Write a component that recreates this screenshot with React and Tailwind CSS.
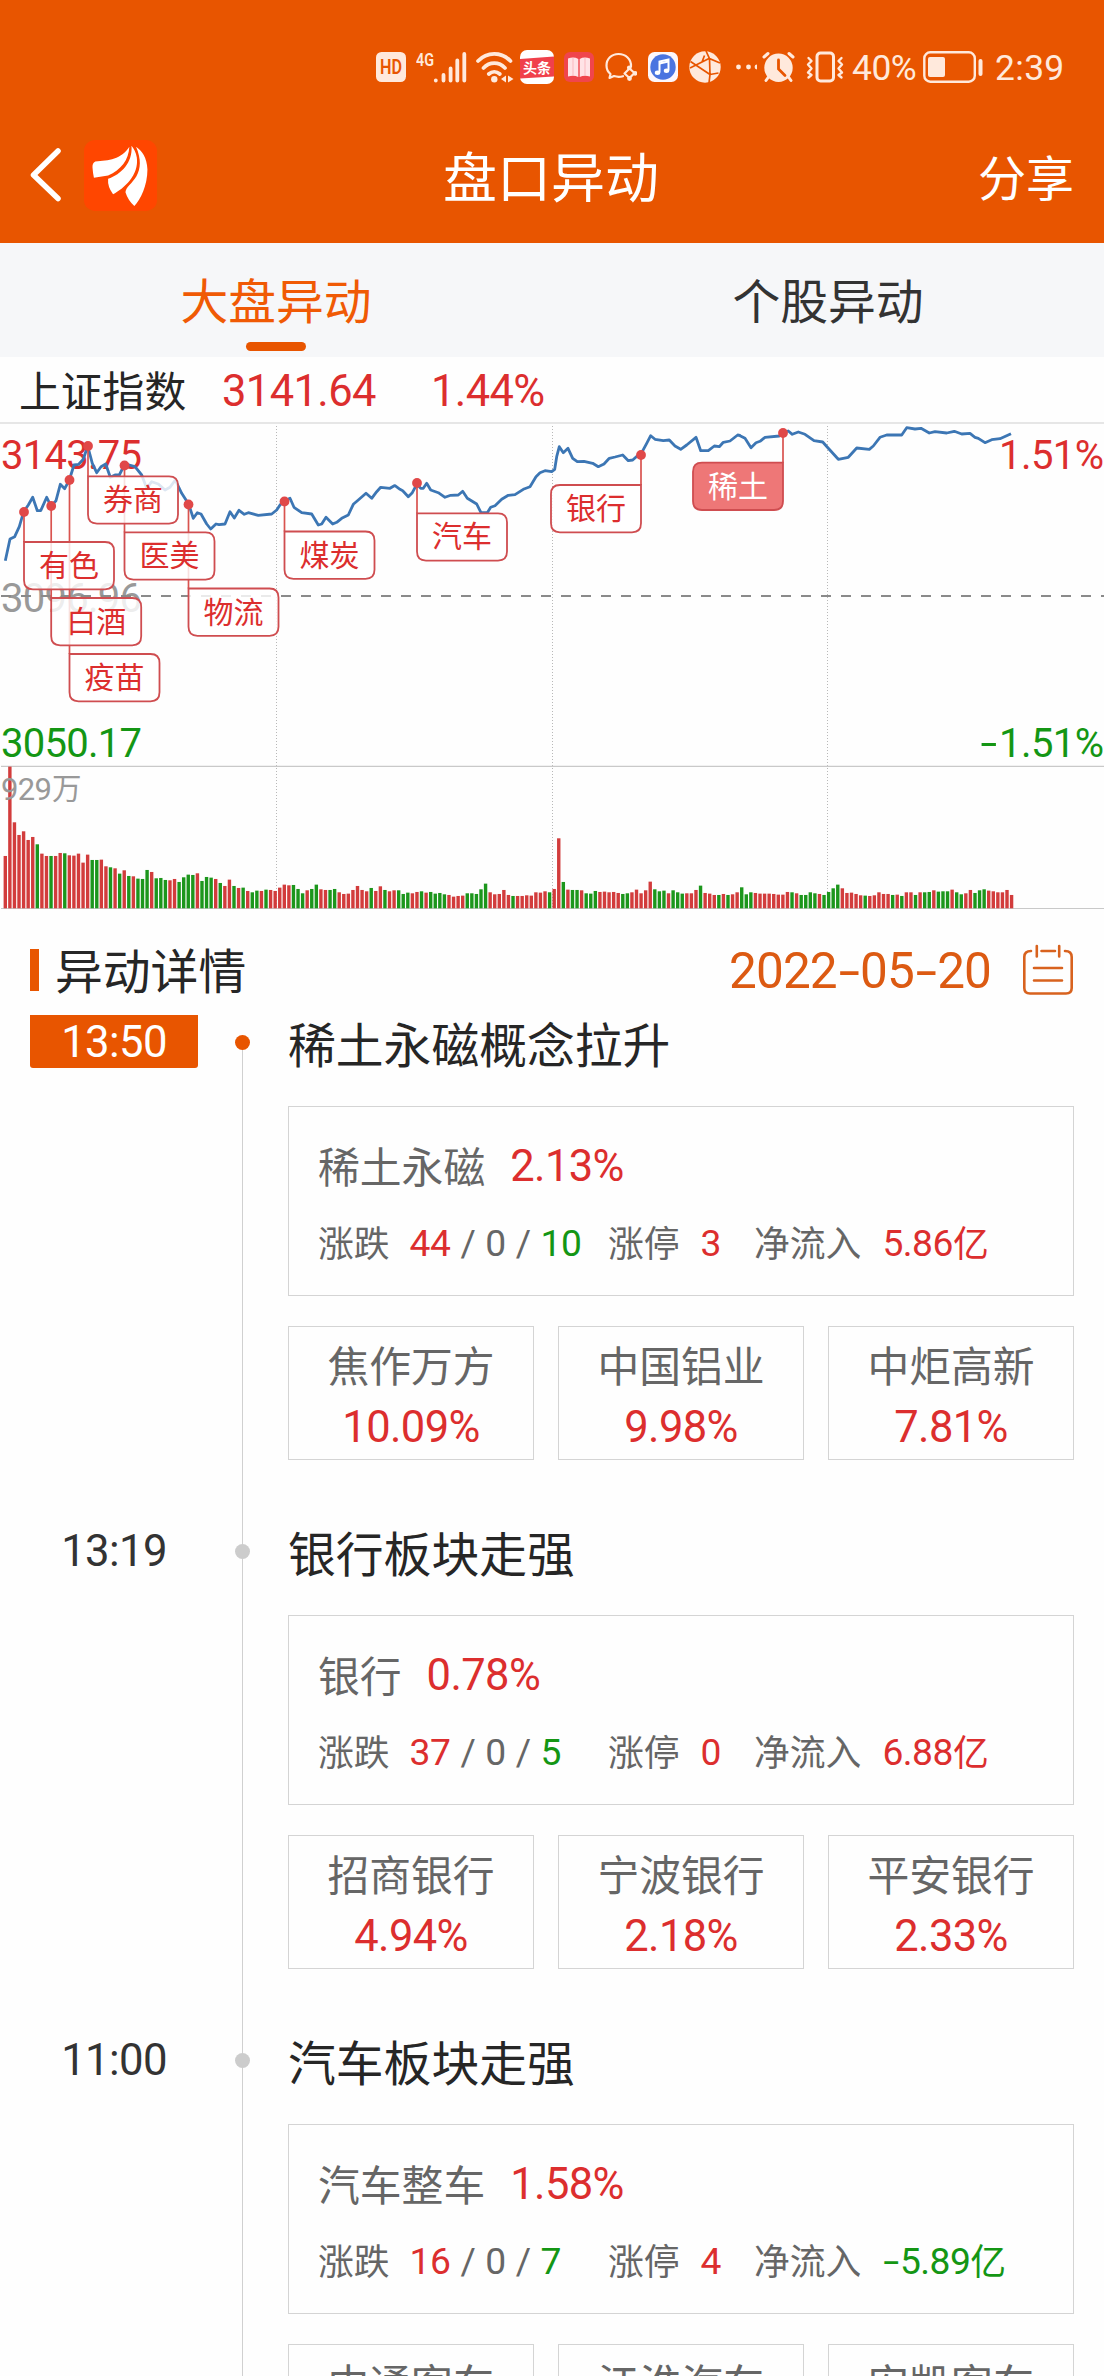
import React from "react";

/* ---------- shared text helpers ---------- */

const NUM = "font-[Roboto] text-[1.04em] tracking-[-0.014em]";

function Dash() {
  return <span className="inline-block w-[0.47em] origin-center scale-x-[1.55] text-center">-</span>;
}

function Num({ children, className = "" }) {
  const parts = String(children).split("-");
  return (
    <span className={`${NUM} ${className}`}>
      {parts.map((part, i) => (
        <React.Fragment key={i}>
          {i > 0 && <Dash />}
          {part}
        </React.Fragment>
      ))}
    </span>
  );
}

/* ---------- status bar ---------- */

const CREAM = "#ffe9dc";

function StatusBar() {
  return (
    <div className="flex h-[134px] items-center pl-[376px] text-[34px] leading-none text-[#ffe9dc]">
      <svg width="30" height="30" viewBox="0 0 30 30">
        <rect width="30" height="30" rx="5.5" fill={CREAM} />
        <text x="15" y="22" textAnchor="middle" fontFamily="Roboto" fontWeight="600" fontSize="19.5" textLength="22" lengthAdjust="spacingAndGlyphs" fill="#e85500">HD</text>
      </svg>
      <svg className="ml-[10px]" width="51" height="32" viewBox="0 0 51 32">
        <text x="0" y="15" fontFamily="Roboto" fontWeight="600" fontSize="18.5" textLength="18" lengthAdjust="spacingAndGlyphs" fill={CREAM}>4G</text>
        <g stroke={CREAM} strokeWidth="3.8" strokeLinecap="round">
          <path d="M19.8 29.3v.2M27.5 24v5.5M34.6 17.5v12M41.3 9.500v20M48.300 3v26.500" />
        </g>
      </svg>
      <svg className="ml-[9px]" width="38" height="32" viewBox="0 0 38 32">
        <g fill="none" stroke={CREAM} strokeWidth="3.7" strokeLinecap="round">
          <path d="M2 10c9-9.500 23.500-9.500 32.500 0M7.500 17c6-6.500 15.500-6.500 21.500 0M12.800 23c3.400-3 7.600-3 11 0" />
        </g>
        <circle cx="18.300" cy="28.300" r="3.200" fill={CREAM} />
        <path d="M30 24.500v7l-5-3.500zM32 24.500v7l5.500-3.500z" fill={CREAM} />
      </svg>
      <svg className="ml-[6px]" width="34" height="34" viewBox="0 0 34 34">
        <rect width="34" height="34" rx="7" fill="#fff" />
        <path d="M0 9L34 6.500V26.500L0 28.500z" fill="#f0404b" />
        <text x="17" y="23" textAnchor="middle" fontFamily="Noto Sans CJK SC" fontWeight="700" fontSize="14" fill="#fff">头条</text>
      </svg>
      <svg className="ml-[10px]" width="30" height="30" viewBox="0 0 30 30">
        <rect width="30" height="30" rx="6" fill="#f0454c" />
        <path d="M4 6.500Q10 4.500 14.300 7V25Q10 23 4 24.500zM26 6.500Q20 4.500 15.700 7V25Q20 23 26 24.500z" fill="#ffe3e6" />
        <path d="M9 5.800v18M21 5.800v18" stroke="#fbb9bf" strokeWidth="1" />
      </svg>
      <svg className="ml-[11px]" width="32" height="30" viewBox="0 0 32 30" fill="none" stroke={CREAM} strokeWidth="2.200" strokeLinejoin="round" strokeLinecap="round">
        <path d="M26 14.500C26.500 7 20.500 2 13.500 2S1.500 7 1.500 13.500c0 3.500 1.500 6.500 4 8.500L4.500 26l4.500-2c3 1 6 1 9 .2" />
        <path d="M24.500 16.500l5 4.500-5 5-5-4.500z" />
        <circle cx="24.300" cy="15.800" r="1.300" fill={CREAM} /><circle cx="30" cy="21.300" r="1.300" fill={CREAM} /><circle cx="24.500" cy="26.500" r="1.300" fill={CREAM} />
      </svg>
      <svg className="ml-[11px]" width="30" height="30" viewBox="0 0 30 30">
        <rect width="30" height="30" rx="6.500" fill="#fdf6fa" />
        <circle cx="15" cy="15" r="12.700" fill="#4b74e0" />
        <path d="M11.500 20.500V9.500l9-2v11" fill="none" stroke="#fff" strokeWidth="2" />
        <path d="M11.500 11.500l9-2" stroke="#fff" strokeWidth="2" />
        <ellipse cx="9.500" cy="20.800" rx="2.700" ry="2.200" fill="#fff" /><ellipse cx="18.500" cy="18.800" rx="2.700" ry="2.200" fill="#fff" />
      </svg>
      <svg className="ml-[11px]" width="32" height="32" viewBox="0 0 32 32">
        <circle cx="16" cy="16" r="15.700" fill={CREAM} />
        <g fill="none" stroke="#e85500" strokeWidth="1.700">
          <path d="M1 17L20 7.500M17 0l3.500 7.500L31 12M1.500 10.500L21 23.500M20.500 7.500l.5 16M21 23.500L20 32M21 23.500l8.500-1.500M15.500 4.500L13 11" />
        </g>
      </svg>
      <svg className="ml-[15px]" width="21" height="6" viewBox="0 0 21 6" fill={CREAM}>
        <circle cx="2.500" cy="3" r="2.400" /><circle cx="12.500" cy="3" r="2.400" /><path d="M21 .6a2.400 2.400 0 0 0 0 4.800z" />
      </svg>
      <svg className="ml-[5px]" width="33" height="32" viewBox="0 0 33 32">
        <g stroke={CREAM} strokeWidth="3" strokeLinecap="round"><path d="M2 6l4-3.500M31 6l-4-3.500M6.500 26L4 29.500M26.500 26l2.500 3.500" /></g>
        <circle cx="16.500" cy="16.800" r="14.200" fill={CREAM} />
        <path d="M16.500 9v9l6.500 6.500" fill="none" stroke="#e85500" strokeWidth="2.800" strokeLinecap="round" />
      </svg>
      <svg className="ml-[11px]" width="38" height="32" viewBox="0 0 38 32" fill="none" stroke={CREAM}>
        <rect x="11" y="2" width="16.500" height="28" rx="3.500" strokeWidth="3" />
        <path d="M2.500 7l3 3-3.500 3.500 3.500 4L2 21.500l3.500 2.500-3 2.500M35.500 7l-3 3 3.500 3.500-3.500 4 3.500 4-3.500 2.500 3 2.500" strokeWidth="2.400" strokeLinecap="round" strokeLinejoin="round" />
      </svg>
      <Num className="ml-[8px] w-[66px] pt-[3px] whitespace-nowrap">40%</Num>
      <svg className="ml-[5px]" width="61" height="32" viewBox="0 0 61 32">
        <rect x="1.300" y="1.300" width="50.500" height="29.400" rx="6" fill="none" stroke={CREAM} strokeWidth="2.400" />
        <rect x="5" y="6" width="17" height="20" rx="2" fill={CREAM} />
        <rect x="55.500" y="8" width="4" height="17" rx="2" fill={CREAM} />
      </svg>
      <Num className="ml-[11px] pt-[3px] tracking-[0.01em]">2:39</Num>
    </div>
  );
}

/* ---------- title bar ---------- */

function TitleBar() {
  return (
    <div className="grid h-[109px] grid-cols-[1fr_auto_1fr] items-start pr-[30px] pl-[28px] text-white">
      <div className="flex pt-[6px]">
        <svg width="36" height="70" viewBox="0 0 36 70" fill="none" stroke="#fff" strokeWidth="5.500" strokeLinecap="round" strokeLinejoin="round">
          <path d="M30 11L5.500 35 30 58.500" />
        </svg>
        <svg className="ml-[20px]" width="73" height="71" viewBox="240 60 206 212" preserveAspectRatio="none">
          <rect x="240" y="60" width="206" height="212" rx="32" fill="#ff4600" />
          <g fill="#fff">
            <path d="M368 80C345 118 310 121 272 124Q263 128 264 142Q265 158 268 173L308 166C345 148 366 120 368 80z" />
            <path d="M374 77C378 128 345 162 308 176Q306 200 322 222C352 205 396 165 389 112Q386 92 374 77z" />
            <path d="M387 80C402 118 400 145 388 168C376 190 358 200 357 216Q364 240 382 257C400 238 419 195 419 148C418 112 403 92 387 80z" />
          </g>
        </svg>
      </div>
      <h1 className="pt-[14px] text-[54px] leading-[54px]">盘口异动</h1>
      <div className="pt-[17px] text-right text-[48px] leading-[48px]">分享</div>
    </div>
  );
}

/* ---------- market chart ---------- */

const PRICE = [
  [0, "16,452 30,387 44,380 58,350 71,305 85,285 98,262 112,302 122,302 140,262 153,288 168,272 181,223 194,236 208,210 222,165 236,163 250,148 263,108 277,160 290,188 303,170 317,162 331,202 345,195 358,195 373,165 388,165 405,170 425,195 440,235 455,215 475,222 495,240 510,232 526,210 545,250 566,283 580,325 592,308 603,312 620,342 632,357 648,342 657,344 675,342 690,305 703,324 717,301 733,313 745,308 775,316 815,312 830,300 840,285 853,272 870,265 882,292 905,308 935,312 955,345 965,342 978,322 998,342 1010,337 1025,325 1045,315 1060,283 1075,270 1098,250 1115,265 1130,245 1142,232 1170,235 1185,227"],
  [380, "60,238 43,227 68,242 85,260 97,248 111,222 122,235 130,235 140,220 152,240 175,248 195,262 212,256 235,255 248,244 262,265 290,282 303,308 322,308 332,292 345,287 365,268 385,256 405,254 430,238 450,230 468,200 480,188 495,182 515,185 524,178 530,140 538,110 550,128 564,115 578,145 592,155 612,154 638,160 655,170 672,162 688,145 705,141 728,135 745,152 758,150 775,135 785,128 800,100 812,77 825,88 850,92 868,90 885,108 902,118 920,105 948,82 962,122 985,122 1003,108 1018,110 1030,97 1050,93 1073,75 1080,76"],
  [740, "0,77 15,85 33,113 48,98 60,94 75,82 118,78 128,68 145,63 157,73 175,66 195,73 222,92 248,96 265,115 295,148 325,142 350,114 388,118 400,108 420,82 440,75 485,75 500,53 525,57 543,55 568,69 585,65 620,69 643,64 665,72 690,70 705,82 715,85 735,98 755,89 780,86 813,71"],
];

const pricePoints = PRICE.flatMap(([origin, list]) =>
  list.split(" ").map((pair) => {
    const [x, y] = pair.split(",").map(Number);
    return [origin + x / 3, 410 + y / 3];
  })
)
  .sort((a, b) => a[0] - b[0])
  .map(([x, y]) => `${x.toFixed(1)},${y.toFixed(1)}`)
  .join(" ");

/* One entry per minute: direction and the bar's top edge; the base line is 475. */
const VOLUME = (
  "r318 r50 r217 r255 r244 r270 r261 g283 r311 r318 g318 r318 r309 g310 r316 r317 r311 r338 r314 g330 g330 r329 r349 g352 r355 g371 r361 g378 r379 g386 g387 g360 r366 g385 g384 g390 r391 r387 g396 g382 g374 g375 r370 g393 g381 g383 r387 g399 r408 r389 g408 r414 g413 r423 g427 g422 r423 g419 r420 r423 r413 r404 r406 g405 g417 g430 r421 g417 g404 r418 r420 g420 g417 r427 r432 r431 r420 r408 r420 r424 g414 r423 " +
  "r409 g420 r424 r421 g421 g432 g428 r430 r426 g424 r428 g426 g431 g429 g433 r435 r440 r438 r437 g430 g430 g432 g418 g401 r427 r433 r432 r420 r435 g438 r438 r438 r436 r437 r427 r428 r424 g427 r417 r265 g396 r419 g420 g420 r421 g430 g431 g423 r426 r425 r427 r426 r429 g432 g430 r427 r419 r430 r421 r395 g418 g424 g422 r430 g421 g427 g431 r430 r430 r420 g407 r429 r431 r435 g435 r432 g435 r433 r427 g412 g433 g427 " +
  "r429 r431 r431 r431 r432 r434 r434 r426 g427 r430 g435 g435 g427 g430 r432 g435 g426 g415 g404 r415 r429 r428 r432 r436 g437 r438 r436 r427 r432 r432 g435 r434 g438 r427 r427 g435 r427 g427 g426 r421 g425 g424 g424 r419 g427 g433 r430 r420 g429 g421 g418 r422 r424 r427 r427 r420 r435"
).split(" ");

const FLAGS = [
  { name: "疫苗", x: 69.5, dot: 480, top: 654 },
  { name: "白酒", x: 51.2, dot: 506, top: 598 },
  { name: "有色", x: 24, dot: 512, top: 542 },
  { name: "物流", x: 188.5, dot: 504.5, top: 588.5 },
  { name: "医美", x: 124.5, dot: 465.5, top: 532.3 },
  { name: "券商", x: 88, dot: 446, top: 476.3 },
  { name: "煤炭", x: 284.5, dot: 501.5, top: 531.5 },
  { name: "汽车", x: 417, dot: 483, top: 513.3 },
  { name: "银行", x: 641, dot: 455, top: 485, left: true },
  { name: "稀土", x: 783, dot: 433, top: 462.7, left: true, active: true },
];

function Flag({ name, x, top, left, active }) {
  const dir = left ? -1 : 1;
  const d = `M${x} ${top}h${81 * dir}q${9 * dir} 0 ${9 * dir} 9v29.300q0 9 ${-9 * dir} 9h${-72 * dir}q${-9 * dir} 0 ${-9 * dir} -9z`;
  const rounded = `M${x} ${top}h${-81}q-9 0 -9 9v29.300q0 9 9 9h72q9 0 9 -9z`;
  return (
    <g>
      <path d={left ? rounded : d} fill={active ? "#ee7777" : "#fff"} fillOpacity={active ? 1 : 0.82} stroke="#cf4d50" strokeWidth="1.800" />
      <text x={x + 45 * dir} y={top + 34} textAnchor="middle" fontFamily="Noto Sans CJK SC" fontSize="30" fill={active ? "#fff" : "#dc2e2e"}>
        {name}
      </text>
    </g>
  );
}

function AxisText({ x, y, width, color, end, size = 40, children }) {
  return (
    <text x={x} y={y} fontFamily="Roboto, 'Noto Sans CJK SC'" fontSize={size} textAnchor={end ? "end" : "start"} textLength={width} fill={color}>
      {children}
    </text>
  );
}

function MarketChart() {
  return (
    <svg className="block" width="1104" height="488" viewBox="0 422 1104 488">
      <rect x="0" y="422" width="1104" height="2" fill="#e6e6e6" />
      <g stroke="#b8b8b8" strokeWidth="1" strokeDasharray="1 2">
        <path d="M276.500 426V908M552.500 426V908M827.500 426V908" />
      </g>
      <path d="M1 766.300H1104M1 908.500H1104" stroke="#c9c9c9" strokeWidth="1.200" />

      {VOLUME.map((bar, i) => {
        const h = (475 - Number(bar.slice(1))) / 3;
        return (
          <rect key={i} x={3.600 + i * 4.574} y={908.300 - h} width="3.400" height={h} fill={bar[0] === "r" ? "#d23c3c" : "#1c961c"} />
        );
      })}

      <AxisText x="1" y="612" width="141" color="#999">3096.96</AxisText>
      <path d="M1 596H1104" stroke="#8a8a8a" strokeWidth="1.800" strokeDasharray="10 10" />
      <AxisText x="1" y="468.500" width="141" color="#dc2e2e">3143.75</AxisText>
      <AxisText x="1" y="756.500" width="141" color="#149614">3050.17</AxisText>
      <AxisText x="1104" y="468.500" width="105" color="#dc2e2e" end>1.51%</AxisText>
      <AxisText x="1104" y="756.500" width="105" color="#149614" end>1.51%</AxisText>
      <text x="0" y="0" transform="translate(980.500 756.500) scale(1.500 1)" fontFamily="Roboto" fontSize="40" fill="#149614">-</text>
      <text x="1" y="800" fontFamily="Roboto" fontSize="31" textLength="51" fill="#999">929</text>
      <text x="52" y="799" fontFamily="Noto Sans CJK SC" fontSize="29.500" fill="#999">万</text>

      <polyline points={pricePoints} fill="none" stroke="#3c76b4" strokeWidth="2.800" strokeLinejoin="round" />

      {FLAGS.map((f) => (
        <path key={f.name} d={`M${f.x} ${f.dot}V${f.top}`} stroke="#d9534f" strokeWidth="1.700" />
      ))}
      {FLAGS.map((f) => (
        <Flag key={f.name} {...f} />
      ))}
      {FLAGS.map((f) => (
        <circle key={f.name} cx={f.x} cy={f.dot} r="4.900" fill="#e04848" />
      ))}
    </svg>
  );
}

/* ---------- event timeline ---------- */

const EVENTS = [
  {
    time: "13:50", title: "稀土永磁概念拉升", sector: "稀土永磁", change: "2.13%",
    up: "44", flat: "0", down: "10", limit: "3", inflow: "5.86",
    stocks: [["焦作万方", "10.09%"], ["中国铝业", "9.98%"], ["中炬高新", "7.81%"]],
  },
  {
    time: "13:19", title: "银行板块走强", sector: "银行", change: "0.78%",
    up: "37", flat: "0", down: "5", limit: "0", inflow: "6.88",
    stocks: [["招商银行", "4.94%"], ["宁波银行", "2.18%"], ["平安银行", "2.33%"]],
  },
  {
    time: "11:00", title: "汽车板块走强", sector: "汽车整车", change: "1.58%",
    up: "16", flat: "0", down: "7", limit: "4", inflow: "-5.89",
    stocks: [["中通客车"], ["江淮汽车"], ["安凯客车"]],
  },
];

function Event({ event, active }) {
  const falling = event.inflow.startsWith("-");
  return (
    <div className="flex h-[509px] shrink-0">
      <div className="w-[168px] shrink-0">
        <div className={`flex h-[53px] items-center justify-center rounded-b-[3px] pt-[2px] text-[42px] leading-none ${active ? "bg-[#e85500] text-white" : "text-[#333]"}`}>
          <Num>{event.time}</Num>
        </div>
      </div>
      <div className="flex w-[89px] shrink-0 flex-col items-center">
        <div className={`h-[20px] w-px ${active ? "bg-transparent" : "bg-[#d0d0d0]"}`} />
        <div className={`size-[15px] rounded-full ${active ? "bg-[#e85500]" : "bg-[#cccccc]"}`} />
        <div className="w-px grow bg-[#d0d0d0]" />
      </div>
      <div className="ml-px w-[786px]">
        <h3 className="pt-[3px] text-[47.800px] leading-[50px] text-[#262626]">{event.title}</h3>
        <div className="mt-[38px] h-[190px] border border-[#d4d4d4] px-[29px] pt-[38px] text-[#666]">
          <div className="flex h-[42px] items-center gap-[25px] text-[41.800px] leading-none">
            <span>{event.sector}</span>
            <Num className="pt-[2px] text-[#dc2e2e]">{event.change}</Num>
          </div>
          <div className="mt-[36px] flex h-[38px] items-center text-[35.800px] leading-none">
            <div className="flex w-[290px] items-center">
              <span className="mr-[20px]">涨跌</span>
              <span className="flex items-center gap-[10px] pt-[4px]">
                <Num className="text-[#dc2e2e]">{event.up}</Num>
                <Num>/</Num>
                <Num>{event.flat}</Num>
                <Num>/</Num>
                <Num className="text-[#149614]">{event.down}</Num>
              </span>
            </div>
            <div className="flex w-[146px] items-center gap-[21px]">
              <span>涨停</span>
              <Num className="pt-[4px] text-[#dc2e2e]">{event.limit}</Num>
            </div>
            <div className="flex items-center gap-[21px]">
              <span>净流入</span>
              <span className={`flex items-center ${falling ? "text-[#149614]" : "text-[#dc2e2e]"}`}>
                <Num className="pt-[4px]">{event.inflow}</Num>亿
              </span>
            </div>
          </div>
        </div>
        <div className="mt-[30px] grid grid-cols-3 gap-[24px]">
          {event.stocks.map(([name, pct]) => (
            <div key={name} className="flex h-[134px] flex-col items-center border border-[#d4d4d4] pt-[16px] text-[41.800px] leading-[42px] text-[#666]">
              <span>{name}</span>
              {pct && <Num className="mt-[22px] text-[#dc2e2e]">{pct}</Num>}
            </div>
          ))}
        </div>
      </div>
    </div>
  );
}

function CalendarIcon() {
  return (
    <svg className="ml-[31px]" width="52" height="52" viewBox="0 0 52 52" fill="none" stroke="#d8621e" strokeWidth="2.600" strokeLinecap="round">
      <path d="M9 7Q2.300 7 2.300 13V44Q2.300 49.500 8 49.500H44Q49.700 49.500 49.700 44V13Q49.700 7 43 7M19.500 7H33M14.800 2V12.500M37.200 2V12.500M12 24H40M12 36.500H40" />
    </svg>
  );
}

/* ---------- page ---------- */

export default function App() {
  return (
    <div className="h-[2376px] w-[1104px] overflow-hidden bg-[#fefefe] font-['Noto_Sans_CJK_SC',sans-serif]">
      <header className="h-[243px] bg-[#e85500]">
        <StatusBar />
        <TitleBar />
      </header>

      <nav className="grid h-[114px] grid-cols-2 bg-[#f6f7f9] text-[47.800px] leading-[50px]">
        <div className="flex flex-col items-center pt-[31px] text-[#f05a05]">
          大盘异动
          <div className="mt-[18px] h-[9px] w-[60px] rounded-full bg-[#e85500]" />
        </div>
        <div className="flex flex-col items-center pt-[31px] text-[#333]">个股异动</div>
      </nav>

      <div className="flex h-[65px] items-center pt-px pl-[19px] text-[41.800px] leading-none">
        <span className="w-[203px] text-[#262626]">上证指数</span>
        <Num className="w-[209px] pt-[4px] text-[#dc2e2e]">3141.64</Num>
        <Num className="pt-[4px] text-[#dc2e2e]">1.44%</Num>
      </div>

      <MarketChart />

      <section className="px-[30px]">
        <div className="flex h-[105px] items-center pt-[15px]">
          <div className="h-[42px] w-[9px] bg-[#e85500]" />
          <h2 className="ml-[16px] grow pb-[3px] text-[47.800px] leading-none text-[#262626]">异动详情</h2>
          <Num className="pt-[3px] text-[49.500px] tracking-[-0.018em] text-[#dc5a12]">2022-05-20</Num>
          <CalendarIcon />
        </div>
        {EVENTS.map((event, i) => (
          <Event key={event.time} event={event} active={i === 0} />
        ))}
      </section>
    </div>
  );
}
